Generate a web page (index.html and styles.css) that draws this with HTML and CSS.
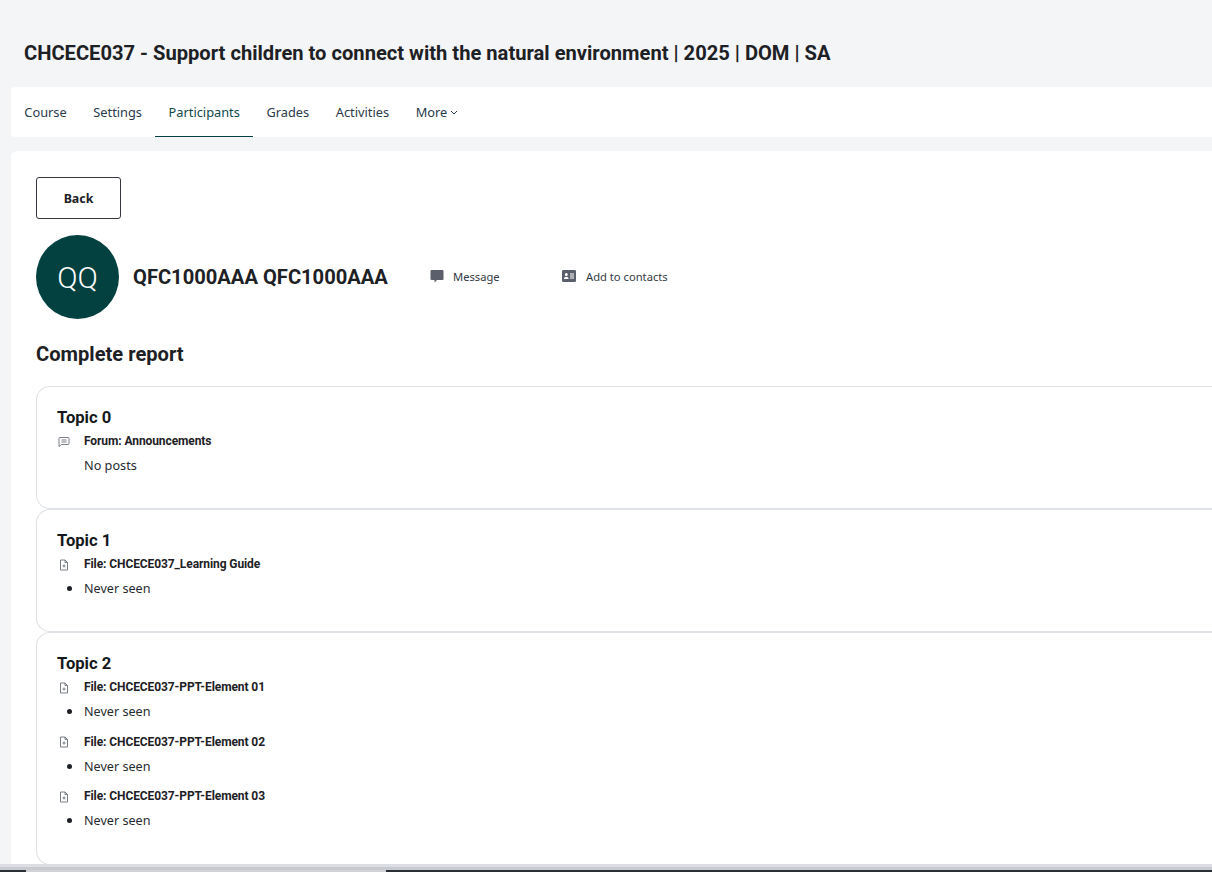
FILE: index.html
```html
<!DOCTYPE html>
<html lang="en">
<head>
<meta charset="utf-8">
<title>Complete report</title>
<link rel="stylesheet" href="styles.css">
</head>
<body>
<div class="page">
  <h1 class="course-title">CHCECE037 - Support children to connect with the natural environment | 2025 | DOM | SA</h1>
  <nav class="tabs">
    <a class="tab">Course</a>
    <a class="tab">Settings</a>
    <a class="tab active">Participants</a>
    <a class="tab">Grades</a>
    <a class="tab">Activities</a>
    <a class="tab">More<svg class="caret" viewBox="0 0 8 5" width="8" height="5"><path d="M1 1l3 3 3-3" fill="none" stroke="#2b3a4a" stroke-width="1"/></svg></a>
  </nav>
  <main class="main">
    <a class="back">Back</a>
    <div class="user">
      <div class="avatar">QQ</div>
      <h2 class="user-name">QFC1000AAA QFC1000AAA</h2>
      <a class="action action-message">
        <svg class="action-icon" viewBox="0 0 14 14" width="14" height="14"><path d="M1.5 1h11a1 1 0 0 1 1 1v8a1 1 0 0 1-1 1H7l-2.5 2.5V11h-3a1 1 0 0 1-1-1V2a1 1 0 0 1 1-1z" fill="#5a5f6b"/></svg>
        Message
      </a>
      <a class="action">
        <svg class="action-icon" viewBox="0 0 14 12" width="14" height="12"><path fill-rule="evenodd" d="M1.2 0h11.6A1.2 1.2 0 0 1 14 1.2v9.6a1.2 1.2 0 0 1-1.2 1.2H1.2A1.2 1.2 0 0 1 0 10.800V1.200A1.200 1.200 0 0 1 1.200 0zM4.300 3a1.500 1.500 0 1 0 0 3 1.500 1.500 0 0 0 0-3zM2 9h4.600c0-1.400-1-2.300-2.300-2.300S2 7.600 2 9zM8 3.500v1h4v-1zM8 5.500v1h4v-1zM8 7.500v1h4v-1z" fill="#5a5f6b"/></svg>
        Add to contacts
      </a>
    </div>
    <h2 class="report-title">Complete report</h2>
    <section class="topic topic-0">
      <h3 class="topic-title">Topic 0</h3>
      <div class="item">
        <svg class="item-icon" viewBox="0 0 12 12" width="12" height="12"><path d="M2 1.500h8a1 1 0 0 1 1 1v5a1 1 0 0 1-1 1H3.500L1 10.500v-8a1 1 0 0 1 1-1zM3.500 4h5M3.500 6h5" fill="none" stroke="#6c717b" stroke-width=".9"/></svg>
        <span class="item-name">Forum: Announcements</span>
      </div>
      <p class="no-posts">No posts</p>
    </section>
    <section class="topic topic-1">
      <h3 class="topic-title">Topic 1</h3>
      <div class="item">
        <svg class="item-icon" viewBox="0 0 12 12" width="12" height="12"><path d="M2.500 1h4.500l2.500 2.500V11h-7zM7 1v2.500h2.500M4.500 7h3M6 5.500v3" fill="none" stroke="#6c717b" stroke-width=".9"/></svg>
        <span class="item-name">File: CHCECE037_Learning Guide</span>
      </div>
      <ul class="status"><li>Never seen</li></ul>
    </section>
    <section class="topic topic-2">
      <h3 class="topic-title">Topic 2</h3>
      <div class="item">
        <svg class="item-icon" viewBox="0 0 12 12" width="12" height="12"><path d="M2.500 1h4.500l2.500 2.500V11h-7zM7 1v2.500h2.500M4.500 7h3M6 5.500v3" fill="none" stroke="#6c717b" stroke-width=".9"/></svg>
        <span class="item-name">File: CHCECE037-PPT-Element 01</span>
      </div>
      <ul class="status"><li>Never seen</li></ul>
      <div class="item">
        <svg class="item-icon" viewBox="0 0 12 12" width="12" height="12"><path d="M2.500 1h4.500l2.500 2.500V11h-7zM7 1v2.500h2.500M4.500 7h3M6 5.500v3" fill="none" stroke="#6c717b" stroke-width=".9"/></svg>
        <span class="item-name">File: CHCECE037-PPT-Element 02</span>
      </div>
      <ul class="status"><li>Never seen</li></ul>
      <div class="item">
        <svg class="item-icon" viewBox="0 0 12 12" width="12" height="12"><path d="M2.500 1h4.500l2.500 2.500V11h-7zM7 1v2.500h2.500M4.500 7h3M6 5.500v3" fill="none" stroke="#6c717b" stroke-width=".9"/></svg>
        <span class="item-name">File: CHCECE037-PPT-Element 03</span>
      </div>
      <ul class="status"><li>Never seen</li></ul>
    </section>
  </main>
</div>
<div class="bottom-strip">
  <div class="strip-light"></div>
  <div class="strip-mid"></div>
  <div class="strip-dark"><span class="strip-gap"></span></div>
</div>
</body>
</html>
```
FILE: styles.css
```css
* { box-sizing: border-box; }
html, body { margin: 0; height: 100%; overflow: hidden; }
body {
  background: #f4f5f7;
  color: #1d2125;
  font-family: "Noto Sans", sans-serif;
  position: relative;
}
.page { padding: 0 0 0 11px; width: 1240px; }
.course-title {
  margin: 0;
  padding: 41px 0 0 13px;
  height: 87px;
  font: 700 20.15px/24px Roboto, sans-serif;
  color: #1d2125;
}
.tabs {
  display: flex;
  height: 50px;
  background: #fff;
  border-radius: 4px 0 0 4px;
}
.tab {
  display: flex;
  align-items: center;
  height: 50px;
  padding: 0 13.3px;
  font-size: 12.8px;
  color: #2b3a4a;
  border-bottom: 1px solid transparent;
}
.tab.active { color: #0f4a4a; border-bottom-color: #034040; }
.caret { margin-left: 3px; margin-top: 1px; }
.main {
  margin-top: 14px;
  padding: 26px 0 0 25px;
  background: #fff;
  border-radius: 6px 0 0 0;
  height: 730px;
}
.back {
  display: flex;
  align-items: center;
  justify-content: center;
  width: 85px;
  height: 42px;
  border: 1px solid #33383f;
  border-radius: 3px;
  font-size: 12.4px;
  font-weight: 700;
}
.user { display: flex; align-items: center; margin-top: 16px; height: 84px; }
.avatar {
  display: flex;
  align-items: center;
  justify-content: center;
  width: 83px;
  height: 84px;
  border-radius: 50%;
  background: #034040;
  color: #fff;
  font: 300 30px Roboto, sans-serif;
}
.user-name {
  margin: 0 0 0 14px;
  width: 297px;
  font: 700 20.15px/24px Roboto, sans-serif;
}
.action {
  display: flex;
  align-items: center;
  padding-bottom: 2px;
  font-size: 11.2px;
  color: #343a44;
}
.action-message { width: 132px; }
.action-message .action-icon { margin-right: 9px; }
.action-icon { margin-right: 10px; }
.report-title {
  margin: 23px 0 0;
  font: 700 20.15px/24px Roboto, sans-serif;
}
.topic {
  margin-top: 0;
  padding: 21px 20px 0;
  border: 1px solid #dee2e6;
  border-radius: 14px 0 0 14px;
  border-right: 0;
}
.report-title + .topic { margin-top: 20px; }
.topic-0, .topic-1 { height: 123px; }
.topic-2 { height: 233px; }
.topic-title {
  margin: 0;
  font: 700 16.6px/19px Roboto, sans-serif;
  color: #14181c;
}
.item {
  display: flex;
  align-items: center;
  height: 17px;
  margin-top: 6px;
}
.item + .status + .item { margin-top: 13.5px; }
.item-icon { margin: 0 14px 0 1px; flex: none; }
.item-name { font: 700 12px/17px Roboto, sans-serif; letter-spacing: -.09px; }
.no-posts { margin: 7px 0 0 27px; font-size: 12.7px; line-height: 17px; color: #262b30; }
.status { margin: 7px 0 0; padding-left: 27px; font-size: 12.6px; line-height: 17px; color: #262b30; list-style: none; }
.status li { position: relative; }
.status li::before {
  content: "";
  position: absolute;
  left: -17px;
  top: 6px;
  width: 5px;
  height: 5px;
  border-radius: 50%;
  background: #1d2125;
}
.bottom-strip {
  position: absolute;
  left: 0;
  right: 0;
  bottom: 0;
  height: 8px;
  display: flex;
  flex-direction: column;
}
.strip-light { height: 3px; background: #dcdee3; }
.strip-mid { height: 3px; background: #c8cacf; }
.strip-dark { height: 2px; background: #2a2f36; padding-left: 26px; }
.strip-gap { display: block; width: 360px; height: 2px; background: #d0d2d6; }
```
